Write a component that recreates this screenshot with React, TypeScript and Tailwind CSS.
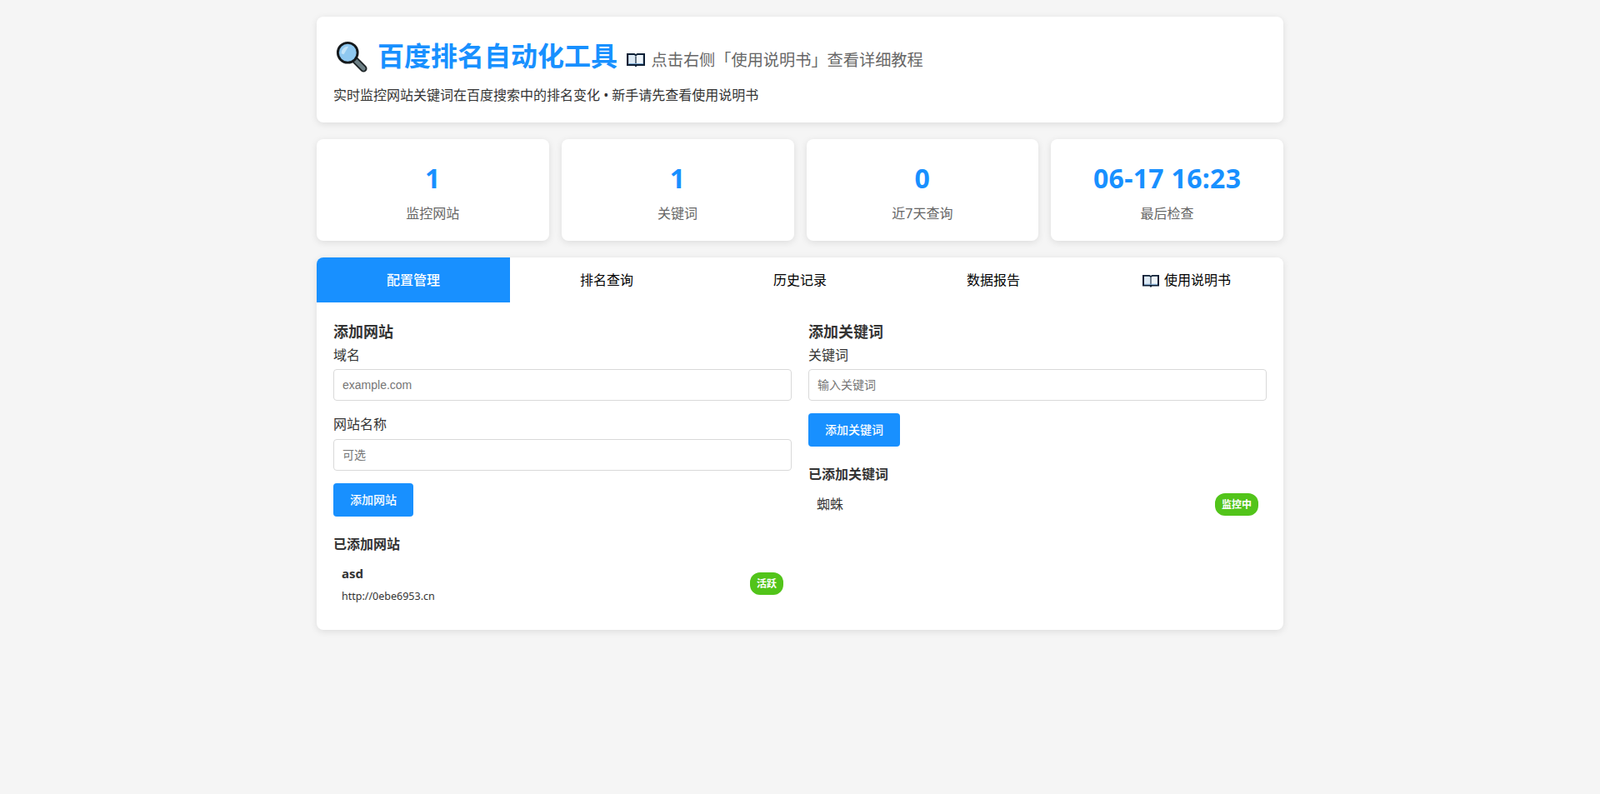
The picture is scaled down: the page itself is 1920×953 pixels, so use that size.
function SearchEmoji() {
  return (
    <svg width="38" height="38" viewBox="0 0 40 40" className="shrink-0">
      <path d="M24 24 L35 35" stroke="#1c2326" strokeWidth="9" strokeLinecap="round" />
      <path d="M25 25 L35 35" stroke="#6d7f85" strokeWidth="5" strokeLinecap="round" />
      <circle cx="15" cy="15" r="12.5" fill="#8fc8f0" stroke="#15191c" strokeWidth="3" />
      <path d="M7 16 A8.5 8.5 0 0 1 16 7 L10 17 Z" fill="#c3e3f8" />
    </svg>
  );
}

function BookEmoji({ size = 22 }: { size?: number }) {
  return (
    <svg width={size} height={(size * 18) / 22} viewBox="0 0 22 18" className="shrink-0">
      <path d="M0 1 H8 C9.5 1 10.5 1.5 11 2.2 C11.5 1.5 12.5 1 14 1 H22 V16 H12.5 L11 17.6 L9.5 16 H0 Z" fill="#0d1f35" />
      <path d="M2.2 3 H8 C9 3 10 3.4 10.4 4.2 V14 H2.2 Z" fill="#dce9f4" />
      <path d="M19.8 3 H14 C13 3 12 3.4 11.6 4.2 V14 H19.8 Z" fill="#eef5fb" />
      <path d="M2.2 13 H19.8 V14 H2.2 Z" fill="#7fabd4" />
    </svg>
  );
}

function Field({ label, placeholder }: { label: string; placeholder: string }) {
  return (
    <div className="mb-[15px]">
      <label className="block pt-[1px] mb-[4px] text-[16px] font-normal text-[#333]">{label}</label>
      <input
        className="block w-full h-[38px] px-[10px] border border-[#d9d9d9] rounded-[4px] bg-white text-[14px] font-['Liberation_Sans','Noto_Sans_CJK_SC',sans-serif] placeholder:text-[#757575]"
        placeholder={placeholder}
      />
    </div>
  );
}

function Badge({ text }: { text: string }) {
  return (
    <span className="px-[8px] py-[4px] rounded-[12px] bg-[#52c41a] text-white text-[12px] font-bold">
      {text}
    </span>
  );
}

const stats = [
  { value: "1", label: "监控网站" },
  { value: "1", label: "关键词" },
  { value: "0", label: "近7天查询" },
  { value: "06-17 16:23", label: "最后检查" },
];

const tabs = ["配置管理", "排名查询", "历史记录", "数据报告"];

export default function App() {
  return (
    <div className="min-h-[953px] bg-[#f5f5f5] pt-[20px] text-[#333] leading-[1.6] font-['Noto_Sans','Noto_Sans_CJK_SC',sans-serif]">
      <div className="w-[1160px] mx-auto">
        {/* Header */}
        <div className="bg-white rounded-[8px] shadow-[0_2px_8px_rgba(0,0,0,0.1)] px-[20px] pt-[20px] pb-[19.4px] mb-[20px]">
          <div className="flex items-center h-[51px] mb-[11px]">
            <span className="ml-[3px] mr-[12px] mt-[4px]">
              <SearchEmoji />
            </span>
            <h1 className="mt-[2px] text-[32px] font-bold text-[#1890ff] leading-[51px]">百度排名自动化工具</h1>
            <span className="ml-[10.5px] mt-[13px]">
              <BookEmoji />
            </span>
            <span className="ml-[8px] mt-[14px] text-[19.2px] font-normal text-[#666]">
              点击右侧「使用说明书」查看详细教程
            </span>
          </div>
          <p className="text-[16px]">实时监控网站关键词在百度搜索中的排名变化 • 新手请先查看使用说明书</p>
        </div>

        {/* Stats */}
        <div className="grid grid-cols-4 gap-[15px] mb-[20px]">
          {stats.map((s) => (
            <div
              key={s.label}
              className="bg-white rounded-[8px] shadow-[0_2px_8px_rgba(0,0,0,0.1)] px-[20px] pt-[21px] pb-[19.6px] text-center"
            >
              <div className="text-[32px] font-bold tracking-[0.3px] text-[#1890ff] mb-[5px]">{s.value}</div>
              <div className="text-[16px] text-[#666]">{s.label}</div>
            </div>
          ))}
        </div>

        {/* Tabs */}
        <div className="bg-white rounded-[8px] shadow-[0_2px_8px_rgba(0,0,0,0.1)] overflow-hidden">
          <div className="grid grid-cols-5 h-[54px] text-[16px] text-black">
            {tabs.map((t, i) => (
              <button
                key={t}
                className={i === 0 ? "pt-[1px] bg-[#1890ff] text-white font-medium" : "pt-[1px] bg-white"}
              >
                {t}
              </button>
            ))}
            <button className="flex items-center justify-center gap-[6px] pt-[1px] bg-white">
              <BookEmoji size={20} />
              使用说明书
            </button>
          </div>

          <div className="grid grid-cols-2 gap-[20px] px-[20px] pt-[20.6px] pb-[21px] items-start">
            <div>
              <h2 className="text-[18px] font-bold">添加网站</h2>
              <Field label="域名" placeholder="example.com" />
              <Field label="网站名称" placeholder="可选" />
              <button className="h-[40px] px-[20px] rounded-[4px] bg-[#1890ff] text-white text-[14px] font-medium">
                添加网站
              </button>
              <h3 className="mt-[21px] text-[16px] font-bold leading-[24.6px]">已添加网站</h3>
              <div className="flex items-center justify-between p-[10px]">
                <div>
                  <div className="text-[15px] font-bold leading-[25.6px]">asd</div>
                  <div className="mt-[5px] text-[12.5px] leading-[19.2px] text-[#333]">http://0ebe6953.cn</div>
                </div>
                <Badge text="活跃" />
              </div>
            </div>

            <div>
              <h2 className="text-[18px] font-bold">添加关键词</h2>
              <Field label="关键词" placeholder="输入关键词" />
              <button className="h-[40px] px-[20px] rounded-[4px] bg-[#1890ff] text-white text-[14px] font-medium">
                添加关键词
              </button>
              <h3 className="mt-[21px] text-[16px] font-bold leading-[24.6px]">已添加关键词</h3>
              <div className="flex items-center justify-between p-[10px]">
                <span className="text-[16px]">蜘蛛</span>
                <Badge text="监控中" />
              </div>
            </div>
          </div>
        </div>
      </div>
    </div>
  );
}
